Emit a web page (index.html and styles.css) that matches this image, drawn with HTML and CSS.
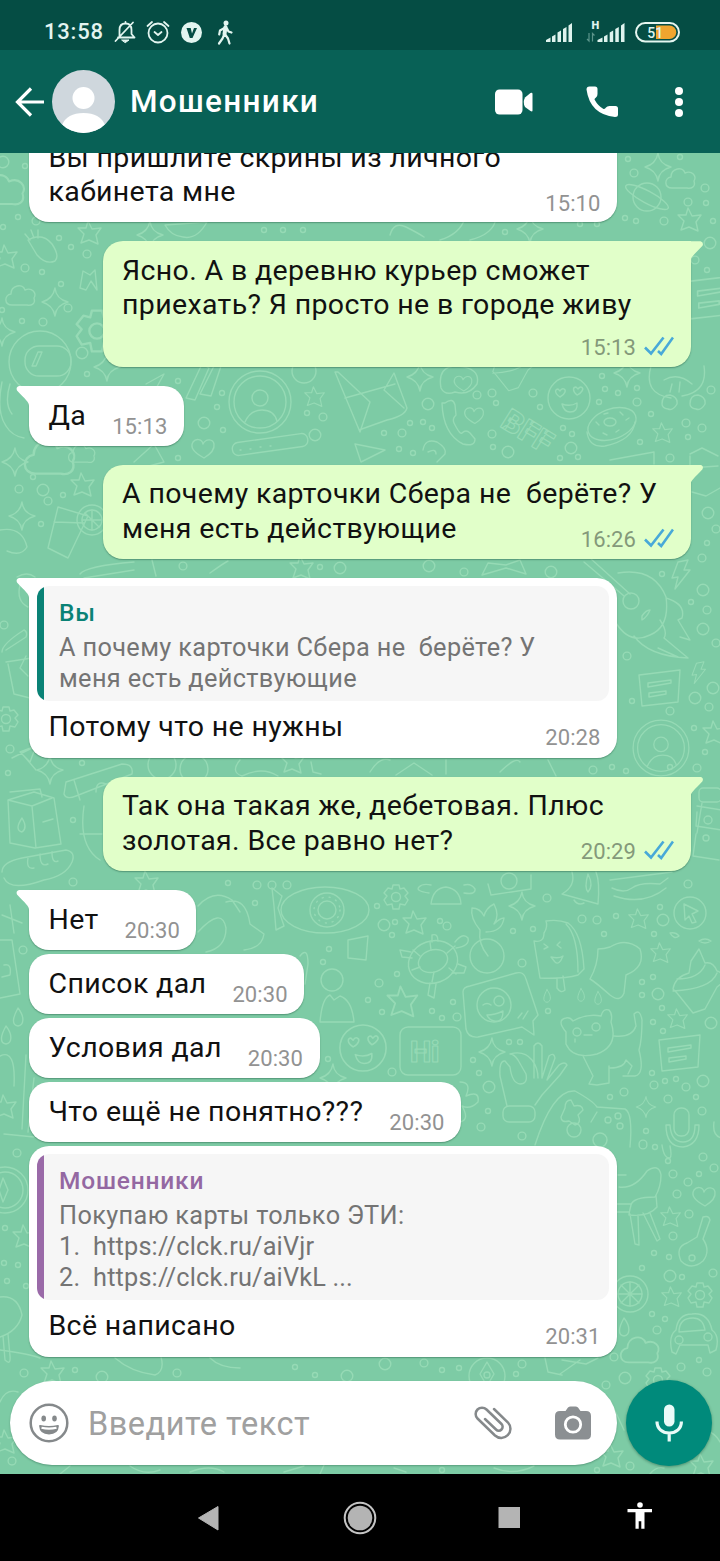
FILE: index.html
```html
<!DOCTYPE html>
<html lang="ru">
<head>
  <meta charset="UTF-8" />
  <meta name="viewport" content="width=device-width, initial-scale=1.0"/>
  <title>Мошенники</title>
  <link rel="stylesheet" href="styles.css">
</head>
<body>
  <div class="statusbar">
    <span class="clock">13:58</span>
    <svg class="status-left" width="122" height="28" viewBox="112 17 122 28" fill="none" stroke="#e3f5f0" stroke-width="1.8" stroke-linecap="round" stroke-linejoin="round">
      <path d="M118 36.500h16.500M119.500 36V29c0-4 2-6.500 6-6.500s6 2.500 6 6.500v4l3 3.500M125.500 22v-1M115.500 40L133 21.500"/>
      <path d="M122 39h7l-3.500 2.500z" fill="#e3f5f0" stroke-width="1"/>
      <circle cx="158" cy="32" r="9.500"/>
      <path d="M154.500 31l3.500 3 3.500-3M147.500 25l4.500-4M168.500 25l-4.500-4"/>
      <circle cx="191.500" cy="31.500" r="10.500" fill="#e3f5f0" stroke="none"/>
      <path d="M186.500 27h4.200l1.300 5.500 2-5.500h3l-4.500 10h-2.700z" fill="#064d44" stroke="none"/>
      <circle cx="226" cy="22" r="2.500" fill="#e3f5f0" stroke="none"/>
      <path d="M225.500 26l-1 7" stroke-width="4"/>
      <path d="M224.500 27l-4.500 2.500-.800 4M227 27.500l1.500 3 3 1M224 34l-1.500 3.500-3.500 5M225.500 34l2.500 3.500 1.500 5" stroke-width="2.200"/>
    </svg>
    <svg class="status-right" width="136" height="26" viewBox="545 18 136 26" fill="#dff3ee">
      <path d="M546 41v-2l4.500-2.500V41zM552 41v-5.500l3.500-2V41zM557.500 41v-9.500l3.500-2V41zM563 41V28l3.500-2v15zM568.500 41V24.500l3.500-2.500v19z"/>
      <text x="591.500" y="28" class="net">H</text>
      <path d="M589 32v8l-2-2M592.500 40.500v-8l2 2" fill="none" stroke="#5c958b" stroke-width="1.200"/>
      <path d="M597.500 41v-2l5-2.500V41zM604 41v-5.500l3.500-2V41zM609.700 41v-9.500l3.500-2V41zM615.300 41V28l3.500-2v15zM621 41V24.500l3.500-2.500v19z"/>
      <rect x="636" y="22" width="43" height="18.500" rx="9.200" fill="none" stroke="#e6f6f0" stroke-width="2"/>
      <path d="M656 24.500h13.500a6.700 6.700 0 0 1 0 13.500H656z" fill="#f0a52f"/>
      <text x="647.200" y="36.800" class="charge">51</text>
    </svg>
  </div>

  <header class="appbar">
    <svg class="back" width="30" height="30" viewBox="0 0 30 30" fill="none" stroke="#fff" stroke-width="3.200"><path d="M16 1.500L2.500 15 16 28.500M2.500 15H29"/></svg>
    <svg class="avatar" width="63" height="63" viewBox="0 0 63 63">
      <clipPath id="round"><circle cx="31.500" cy="31.500" r="31.500"/></clipPath>
      <g clip-path="url(#round)"><rect width="63" height="63" fill="#cfd7dd"/><circle cx="31.500" cy="28" r="11" fill="#fff"/><path d="M10 63V55q5-12 21.500-12T53 55v8z" fill="#fff"/></g>
    </svg>
    <h1 class="title">Мошенники</h1>
    <svg class="video" width="38" height="26" viewBox="0 0 38 26" fill="#fff"><rect x="0" y=".500" width="27.500" height="25" rx="4.500"/><path d="M30 8.500L35.500 4Q37.500 3 37.500 5v16.500q0 1.500-2 .500L30 18q-2.500-4.700 0-9.500z"/></svg>
    <svg class="phone" width="32" height="32" viewBox="0 0 32 32" fill="#fff"><path d="M3.500.500h5.500Q11.500.500 11.500 3v5q0 2.500-1.500 3.500-1.500 1-1.500 2 3.500 6.500 9 9.500 1.500 0 2.500-1.500t3.500-1.500h6q2.500 0 2.500 2.500v6q0 2.500-3 2.500Q4 28.500.500 3.500.500.500 3.500.500z"/></svg>
    <svg class="dots" width="8" height="30" viewBox="0 0 8 30" fill="#fff"><circle cx="4" cy="4" r="4"/><circle cx="4" cy="15" r="4"/><circle cx="4" cy="26" r="4"/></svg>
  </header>

  <main class="chat">
    <svg class="wallpaper" width="720" height="1321" viewBox="0 153 720 1321">
      <defs>
        <path id="star" d="M-2-12L2-4 11-5 6 2 8 11-1 7-9 10-6 1-12-5-4-5z"/>
        <path id="spark" d="M0-14Q1-3 13 0 1 3 0 14-2 3-13 0-2-3 0-14z"/>
        <path id="heart" d="M1 10C-10 4-13-1-10-6-7-10-1-9 0-4 3-10 10-9 11-4 12 2 6 7 1 10z"/>
        <path id="cloud" d="M-11 8c-8 0-8-10-1-11 0-9 12-11 14-4 7-3 12 3 9 8 2 6-3 8-7 7z"/>
        <path id="drop" d="M0-9C7 0 6 8 0 9-7 8-5 0 0-9z"/>
        <path id="bolt" d="M-2-13L8-15 4-5 10-5-5 14-2 2-8 3z"/>
        <g id="gear"><path d="M-3-12h6l1 4 4-1 4 5-3 3 3 4-3 5-5-1-1 5h-6l-1-5-5 1-3-5 3-4-3-3 4-5 4 1z"/><circle r="4.500"/></g>
        <g id="note"><path d="M-21-12L20-17 18 15-18 19zM-12-4L11-7v3L-12 0zM-11 6L6 4v3l-17 3z"/></g>
        <g id="face"><circle r="31"/><circle r="26"/><circle cy="-4" r="8"/><path d="M-15 20Q-10 8 2 8T17 19"/></g>
        <g id="love"><circle r="21"/><path d="M-9-1c-6-4-5-8-2-8l2 2c2-4 6-2 5 1s-3 4-5 5zM8-3c-5-4-4-8-1-8l2 2c3-4 6-1 4 2s-3 3-5 4zM-7 6Q1 9 8 5 9 14 1 14-5 14-7 6z"/></g>
        <g id="cake"><path d="M-24 12Q-22 0-8-4L-6-16 2-28 8-14Q16-16 20-6 28-4 25 6L20 10 8 32-4 36-20 16zM-20 2Q2 2 8-12M-24 14Q14 12 20-4"/></g>
        <path id="rings-s" d="M628 159h0M680 157h0M706 203h0M636 221h0M625 218h0M713 221h0M505 232h0M580 224h0M597 224h0M25 166h0M18 217h0M3 227h0M264 230h0M283 230h0M303 230h0M59 238h0M71 247h0M42 272h0M61 284h0M22 321h0M2 310h0M87 374h0M178 381h0M222 393h0M217 407h0M223 430h0M307 413h0M178 458h0M33 477h0M63 495h0M41 524h0M496 403h0M540 407h0M410 423h0M423 422h0M432 428h0M384 433h0M399 449h0M413 453h0M493 447h0M563 428h0M572 434h0M560 458h0M578 457h0M605 389h0M618 393h0M599 402h0M637 388h0M651 414h0M707 270h0M640 442h0M688 437h0M707 543h0M602 376h0M8 773h0M82 763h0M73 820h0M320 567h0M228 883h0M287 884h0M662 574h0M691 602h0M632 701h0M694 728h0M705 752h0M670 767h0M612 767h0M626 771h0M395 922h0M392 935h0M440 921h0M513 931h0M533 929h0M616 916h0M604 934h0M660 907h0M654 934h0M377 906h0M397 974h0M368 1000h0M382 1012h0M453 1002h0M432 1011h0M442 1018h0M548 1011h0M509 1042h0M520 1042h0M473 1060h0M479 1073h0M642 982h0M653 977h0M642 995h0M662 1008h0M653 1022h0M663 1031h0M652 1073h0M665 1081h0M676 1079h0M696 1097h0M610 1097h0M646 1131h0M488 1111h0M255 903h0M257 885h0M329 949h0M323 962h0M328 1059h0M5 1228h0M4 1263h0M18 1265h0M7 1281h0M26 1286h0M75 1370h0M295 1367h0M315 1375h0M668 1161h0M699 1174h0M654 1253h0M669 1257h0M642 1268h0M682 1277h0M652 1314h0M665 1319h0M699 1360h0M442 1370h0M459 1368h0M516 1374h0M655 1147h0M12 1462h0M597 1470h0M442 1470h0"/>
        <path id="rings-m" d="M705 188h0M688 202h0M634 173h0M664 221h0M36 221h0M87 254h0M25 268h0M68 308h0M43 322h0M323 417h0M19 489h0M48 501h0M477 395h0M492 393h0M533 393h0M402 433h0M492 434h0M637 402h0M686 423h0M702 428h0M711 390h0M695 260h0M670 458h0M716 529h0M702 558h0M4 625h0M10 749h0M73 882h0M183 566h0M257 885h0M272 885h0M627 656h0M707 610h0M716 643h0M709 707h0M670 711h0M697 768h0M593 770h0M464 572h0M447 926h0M522 963h0M582 919h0M597 920h0M688 884h0M547 898h0M379 983h0M457 1017h0M392 1072h0M654 1085h0M686 1087h0M668 1099h0M702 1111h0M624 1092h0M643 1145h0M481 1127h0M522 1136h0M23 950h0M287 885h0M17 1153h0M24 1373h0M177 1373h0M643 1144h0M703 1157h0M714 1168h0M673 1174h0M688 1182h0M677 1194h0M689 1214h0M673 1236h0M713 1273h0M657 1330h0M614 1357h0M681 1367h0M707 1372h0M424 1363h0M522 1364h0M606 1385h0M630 1466h0M12 1461h0"/>
        <path id="rings-l" d="M3 162h0M82 353h0M204 423h0M315 435h0M43 490h0M428 404h0M508 452h0M571 448h0M710 243h0M708 513h0M340 568h0M703 590h0M703 629h0M713 688h0M695 698h0M429 566h0M551 572h0M384 925h0M663 920h0M489 1087h0M658 994h0M711 1023h0M703 1081h0M670 1276h0M625 1378h0M385 1364h0M102 1377h0M347 1376h0"/>
      </defs>
      <rect class="wall" y="153" width="720" height="1321"/>
      <use href="#rings-s" class="ring s"/><use href="#rings-s" class="hole s"/>
      <use href="#rings-m" class="ring m"/><use href="#rings-m" class="hole m"/>
      <use href="#rings-l" class="ring l"/><use href="#rings-l" class="hole l"/>

      <g class="doodles">
        <use href="#star" x="690" y="220"/><use href="#star" x="90" y="233"/><use href="#star" x="6" y="257"/>
        <use href="#star" transform="translate(315 397) scale(.850)"/><use href="#star" x="83" y="485"/><use href="#star" transform="translate(663 433) scale(.850)"/>
        <use href="#star" x="147" y="883"/><use href="#star" x="293" y="762"/><use href="#star" x="715" y="733"/>
        <use href="#star" transform="translate(639 919) scale(.850)"/><use href="#star" x="415" y="923"/><use href="#star" transform="translate(661 953) scale(.850)"/>
        <use href="#star" transform="translate(678 1019) scale(.850)"/><use href="#star" x="5" y="1107"/><use href="#star" x="25" y="1237"/>
        <use href="#star" x="53" y="1373"/><use href="#star" transform="translate(671 1217) scale(.850)"/><use href="#star" transform="translate(672 1297) scale(.850)"/>
        <use href="#star" transform="translate(403 1002) scale(1.300)"/><use href="#star" x="302" y="568"/>
        <use href="#star" x="612" y="1456"/><use href="#star" x="702" y="1466"/><use href="#star" x="6" y="1442"/>
        <use href="#spark" x="658" y="167"/><use href="#spark" x="150" y="235"/><use href="#spark" x="55" y="302"/>
        <use href="#spark" x="107" y="367"/><use href="#spark" x="15" y="462"/><use href="#spark" x="22" y="516"/>
        <use href="#spark" x="420" y="377"/><use href="#spark" x="627" y="373"/><use href="#spark" x="50" y="770"/>
        <use href="#spark" x="522" y="906"/><use href="#spark" x="492" y="1052"/><use href="#spark" transform="translate(646 1107) scale(.750)"/>
        <use href="#spark" x="2" y="332"/><use href="#spark" x="333" y="1078"/><use href="#spark" x="530" y="229"/>
        <use href="#heart" x="203" y="448"/><use href="#heart" transform="translate(474 415) scale(.850)"/>
        <use href="#heart" x="704" y="1196"/><use href="#heart" transform="translate(463 383) scale(.800)"/>
        <use href="#cloud" x="683" y="180"/><use href="#cloud" x="23" y="297"/><use href="#cloud" transform="translate(6 192) scale(1.500)"/>
        <use href="#cloud" transform="translate(643 1352) scale(1.300)"/><use href="#cloud" transform="translate(54 460) scale(1.700)"/>
        <use href="#cloud" transform="translate(84 455) scale(.900)"/>
        <use href="#drop" x="18" y="1017"/><use href="#drop" x="6" y="1035"/><use href="#drop" transform="translate(547 996) scale(.700)"/>
        <use href="#drop" transform="translate(581 995) scale(.700)"/><use href="#drop" transform="translate(598 998) scale(.700)"/><use href="#drop" x="624" y="1327"/>
        <use href="#bolt" x="680" y="575"/><use href="#bolt" transform="translate(698 673) scale(.750)"/>
        <use href="#gear" x="396" y="897"/><use href="#gear" x="6" y="719"/><use href="#gear" x="700" y="1295"/><use href="#gear" x="658" y="1380"/>
        <use href="#gear" transform="translate(97 331) scale(1.700)"/>
        <use href="#note" x="660" y="687"/><use href="#note" x="680" y="1052"/><use href="#note" transform="translate(712 296) scale(1.200)"/>
        <use href="#face" x="260" y="402"/><use href="#face" transform="translate(661 748) scale(.900)"/>
        <use href="#love" x="569" y="398"/><use href="#love" transform="translate(363 1048) scale(1.100)"/>
        <use href="#cake" x="697" y="977"/><use href="#cake" transform="translate(512 362) scale(.800)"/>

        <!-- planet, carrot, helmet -->
        <circle cx="647" cy="197" r="14"/><ellipse cx="647" cy="197" rx="24" ry="6" transform="rotate(28 647 197)"/>
        <path d="M28 240q14-8 24 4 8 12 3 17-9 4-18-6zM30 240l-5-6M34 238l-3-8M38 238v-8M80 288l3-17 7 4 5-5 2 20-6-9-5 9zM165 225l42-3q-10 18-24 15-12-1-18-12zM390 235q4-14 16-8t18 10M440 240q20-6 25-22M470 240q24-6 26-22"/>
        <circle cx="40" cy="362" r="31"/><rect x="25" y="346" width="46" height="30" rx="14"/><path d="M32 366l6-14h4l-6 14zM2 382q-6 30 4 44 6 10 18 12M10 384q-6 20 2 30"/>
        <!-- crayon, flute, slice, cup -->
        <path d="M186 398l16-34 7 4-14 32zM200 394l16-32 5 4-10 30zM134 462l20-18 10 18-30 8M146 384l18-10-10 18"/>
        <rect x="232" y="438" width="76" height="13" rx="6" transform="rotate(-8 270 444)"/><path d="M240 450h1M250 449h1M260 447h1M270 446h1"/>
        <circle cx="92" cy="520" r="15"/><circle cx="92" cy="520" r="10"/><path d="M82 520h20M92 510v20M85 513l14 14M58 507l30 9-20 42-20-10zM54 522l30 1M0 530q22-4 27 17-6 10-20 4"/>
        <circle cx="304" cy="371" r="12"/><path d="M335 372l25 60 10-30-32-30zM345 398l50-14M384 390l10-17 13 35q-2 8-20 12l-28 10M384 390l20 18M355 444l30 6-24 12zM423 450q2-12 14-8 10 6 8 12l-8 8M428 452q8-4 8 2"/>
        <!-- phone, donut, cookie -->
        <path d="M445 403q8-6 10 2l1 10q-4 4-2 8 6 12 8 10 4-4 8 0l5 6q0 8-12 5-20-10-21-41z"/>
        <ellipse cx="612" cy="424" rx="25" ry="15" transform="rotate(-20 612 424)"/><ellipse cx="610" cy="422" rx="6" ry="4"/><path d="M587 432q2 16 18 14 28-6 30-24M596 422l3 3M604 414l4-1M620 412l3 3M626 420l3-2M616 432l3-2M603 433l4 2"/>
        <path d="M441 388q-4-22 16-22 24 2 20 18-8 12-22 8-10 4-14-4zM651 366q-8 28 20 32M704 366q4 26-22 30M664 380q14-8 28 4M672 384l-2 8M680 382l-1 10M690 404q0-9 8-9 8 2 7 9-4 7-9 5-6-1-6-5zM662 404q0-9 8-9 8 2 7 9-4 7-9 5-6-1-6-5zM610 460l44-8v12M690 454l12-6 16 8M690 456v12l28-2M692 492l14 4 14-8"/>
        <text x="499" y="426" class="letters" transform="rotate(32 499 426)">BFF</text>
        <!-- guitar -->
        <circle cx="631" cy="601" r="8"/><path d="M584 562l40 34M590 558l40 36M618 573q36-6 48 24 4 30-16 38-20 10-34-12M642 616q4-6 8-6-3 7-8 10zM666 598q20 6 16 20l-4 2 12 20-10-3M660 620q8 12 4 18l24 20q-40-2-54-22M658 648l20 9M482 575l6-12 18 2 14-5 6 14-20-6z"/>
        <!-- left column: bag, clip, picture, carton, bread -->
        <path d="M17 577q10-6 18 0M20 585q-4 16 8 22M6 662l26-4M8 664l6 30 16 4M26 656l-6 12 8 8M2 652q0-8 22-22 4 2 2 7L6 650M80 574q6-8 54-12M84 578l50-8M152 560l4 16M210 573q14-10 18-12"/>
        <path d="M8 800l26-8 20 6 7 46-26 4-25-5zM8 800l24 6 20-8M32 806l4 42M10 792l30-3 2 8M22 818q-8 12 0 14 6-4 0-14zM43 822l10-3"/>
        <path d="M2 872q0-10 20-14l44-8q10 2 6 12-6 14-28 18-34 12-40-2M28 858q-2 12 6 10M40 854q0 14 8 10M52 852q0 12 6 9"/>
        <path d="M20 752l16-6-6 16zM24 756l12 14M12 758l24-12M66 782l56-18q12 0 10 10l-56 22q-10 4-12-2zM74 780l6 20M96 792q0-12 10-8M84 806q-6 40 16 54M80 834h22"/>
        <circle cx="162" cy="765" r="14"/><circle cx="194" cy="769" r="14"/><path d="M240 760q-10 12 2 16 20-10 36 0M311 762l2 10 8 2M370 772q10-16 20-12M396 775l18-12 18 12M446 760v14M500 772q16-16 20-10M548 760l8 16"/>
        <!-- robot -->
        <rect x="699" y="788" width="22" height="14" rx="4"/><path d="M697 806l24 4M697 812l-1 14 26 4M696 834l-3 22 26 4M702 803l-5 30"/><circle cx="708" cy="820" r="4"/><circle cx="706" cy="838" r="3"/>
        <!-- swan, fish eye, person -->
        <path d="M198 906q16-18 34-6l8 12M198 932q24-26 28-4 0 20-20 24M226 902q20-6 24 22l14 10q-2 14-20 16"/>
        <ellipse cx="325" cy="910" rx="44" ry="23"/><circle cx="327" cy="910" r="17"/><circle cx="327" cy="910" r="9"/><circle cx="327" cy="910" r="13" stroke-dasharray="1 6"/><path d="M274 906l-2-18 10 8-4 12 6 18-8 4z"/>
        <circle cx="332" cy="980" r="11"/><path d="M320 1022q2-24 10-27l4 5 6-4q12 4 14 26zM348 940l20-4-2 24-18-2zM300 956q8-10 8 8l-3 20"/>
        <path d="M0 940h12l8 54-20 4M4 965q8-2 6 10l-8 2M2 915l20 8M10 905l4 28M0 1056q16-8 14 30M26 1055l-4 74M34 1078l-6 54M4 1134l30 3"/>
        <!-- sun, camera, bell, burger, pointer -->
        <path d="M431 904q2-16 15-17 14 2 15 17zM429 893q-14-2-10-6 4-4 12-2M464 893q12 2 11-4-4-6-11-4M488 884l3 11 40-6v-14"/><circle cx="509" cy="881" r="8"/>
        <path d="M562 894q14-8 10-22M596 872q4 10 2 32l-36-10M574 900q4 6 10 3M588 874q6 12 0 18-4-4 0-18zM610 880l62-8M612 888q12 6 20 0t28-4l8-6M614 896q30 10 52-8"/>
        <circle cx="690" cy="913" r="16"/><path d="M684 904l14 7-6 3 4 8-4 1-3-7-4 4zM670 933q6-1 9 3-5 4-9-3zM699 941q6-4 12 0-6 4-12 0z"/>
        <!-- cherry, turtle, ice cream, chat -->
        <circle cx="487" cy="956" r="17"/><path d="M488 956q-10-12-8-26-10-12-8-22 8 0 12 8 2-8 10-12 6 12 0 20 6-6 10-6-2 14-18 14"/>
        <ellipse cx="433" cy="962" rx="25" ry="21" transform="rotate(-20 433 962)"/><ellipse cx="433" cy="961" rx="15" ry="11" transform="rotate(-20 433 961)"/><path d="M413 950l7 6M412 970l8-3M432 982l2-10M449 968l7 6M447 953l8-7M430 942l1 8M432 942v-7q6-2 6 6M455 942q8-10 13-4 2 8-12 10M458 964l8 3-2 6h-12M411 952l-11-2 2 7 10 1M430 983l-2 12 6 3 2-14"/>
        <path d="M534 941q10 2 10-8 4-6 2-12 12-2 22 2 14 10 16 46l-6 6q-14 4-38 3zM566 924q12 12 12 48M544 944l4 3-4 2M560 942l-3 3 4 3M551 957q8 2 12-1-4 10-8 6zM557 978v10q4 6 8 2l-2-14"/>
        <path d="M598 949q6 0 12-2 16-10 30 2 6 18-14 26l-2 18q-4 10-14 2-16-14-20-16 8-14 8-30z"/>
        <path d="M470 986l46-13q8-2 10 6l12 36-5 6 1 14-12-8-44 10q-10 1-12-8L463 992q0-5 7-6z"/><circle cx="494" cy="1005" r="17"/><circle cx="499" cy="1001" r="5"/><path d="M483 1005q4-3 8 0M487 1015q8 0 16-4 0 12-9 10-5-1-7-6zM518 1018l4-5M523 1019l5-8"/>
        <rect x="400" y="1027" width="61" height="48" rx="8"/><text x="410" y="1062" class="letters hi">Hi</text>
        <!-- hand, cat, gamepad, mic -->
        <path d="M507 1106l-7-30q-1-16 5-15l5 6q2 16 10 17 8 0 6-10l-8-14q-4-6-8-6 14-4 22 6 6 8 6 18M535 1105l7-10 18-20 7-10q-2-4-8 0l-12 15 8-22q-1-6-6-2l-7 22V1046q-4-6-8 0v32"/><rect x="503" y="1106" width="32" height="16" rx="6"/>
        <path d="M566 1032q-10-12 0-14 4-1 7 3 14-8 28-5 2-8 8-6 4 4 2 12 8 24-14 32-24 6-31-10zM583 1056q8 16 10 20l-4 8 8 1 12-2V1066M614 1036q18 2 22-10l-2-12q6-6 8 6 0 20-3 30 6 24-4 26h-12M610 1068q14 0 16-8l6 6-4 8M584 1035h8M575 1042v-3"/><circle cx="577" cy="1032" r="4"/><circle cx="596" cy="1027" r="4"/>
        <path d="M535 1145q18-56 40-54 18 10 22 16l28 2q8 4 5 38M565 1108q0-8 6-8l3 6q8-2 9 4l-5 5q4 8-3 10l-6-4q-8 2-8-4zM591 1122l6-10"/><circle cx="574" cy="1130" r="7"/><circle cx="600" cy="1140" r="7"/><circle cx="608" cy="1120" r="3"/><circle cx="618" cy="1116" r="3"/><circle cx="620" cy="1126" r="3"/>
        <rect x="674" y="1108" width="15" height="28" rx="7"/><path d="M666 1125q0 22 17 22 16-2 16-22h-4q0 17-12 17t-13-17zM460 1082q12 0 6 14 14-6 12 6-8 8-16 4 8 14-2 16M714 1122q-2 14 8 16"/>
        <!-- chair, guitar, wheel, car -->
        <path d="M619 1187q16 2 28-16 12-8 14 4 0 12-6 22-22 0-24 8-2 8-2 10 20 2 28-8l-1-12M617 1204h14M617 1212h12M630 1214l5 30 4 1-1-30M643 1213l14 28 3-2-10-26M618 1175h8M662 1145q2 14 8 13 2-2 0-12"/>
        <path d="M697 1237l6-20q6-2 7 3l-7 19q8 12 0 22-12 10-22 0-6-14 6-18z"/><circle cx="692" cy="1258" r="3"/>
        <circle cx="630" cy="1294" r="18"/><circle cx="630" cy="1294" r="12"/><path d="M621 1285l18 18M630 1282v24M639 1285l-18 18M618 1294h24"/>
        <path d="M672 1352q-4-16 4-22 2-16 16-16 16-2 20 16 8 6 4 20l-6 3-2-8h-28l-4 9zM679 1332q0-14 14-14 10 0 12 12z"/><circle cx="679" cy="1340" r="4"/><circle cx="708" cy="1337" r="4"/>
        <circle cx="5" cy="1190" r="23"/><circle cx="5" cy="1190" r="18"/><path d="M3 1178l5 12-5 12-4-12zM0 1297q18-2 22 18-4 16-22 22M3 1336l2 24q6 6 5-4l-2-22M0 1350q30 4 40 8M115 1358q16 14 40 17 10-4 6-18M210 1358q10 10 30 10M545 1358l3 14 14 3M562 1360l24 4 12-6M560 1374l20-14"/>
        <circle cx="487" cy="1376" r="18"/><path d="M487 1362l7 12-7 12-7-12z"/><circle cx="487" cy="1375" r="3"/>
        <path d="M610 1400l14 30M706 1430q10 4 14 12M0 1402q6-14 18-10M130 1466q14 10 30 4M190 1472q20-8 34 0M284 1472l20-6M320 1474l4-9M60 1474l10-8M494 1468q20 8 40-2M394 1468l12 4M650 1474q6-8 14-6"/>
      </g>
    </svg>

    <div class="thread">
      <div class="messages">
        <div class="bubble in wide">
          <p class="text">Вы пришлите скрины из личного<br>кабинета мне</p>
          <span class="meta">15:10</span>
        </div>
        <div class="bubble out wide tail tall">
          <p class="text">Ясно. А в деревню курьер сможет<br>приехать? Я просто не в городе живу</p>
          <span class="meta">15:13<svg class="ticks" width="30" height="20" viewBox="0 0 30 20"><path d="M1 11.500l6 6L19.500 1.500M14 15l3.200 3L29 1.500"/></svg></span>
        </div>
        <div class="bubble in tail">
          <p class="text">Да</p>
          <span class="meta">15:13</span>
        </div>
        <div class="bubble out wide tail">
          <p class="text">А почему карточки Сбера не&nbsp; берёте? У<br>меня есть действующие</p>
          <span class="meta">16:26<svg class="ticks" width="30" height="20" viewBox="0 0 30 20"><path d="M1 11.500l6 6L19.500 1.500M14 15l3.200 3L29 1.500"/></svg></span>
        </div>
        <div class="bubble in wide tail quoted">
          <div class="quote you">
            <strong class="who">Вы</strong>
            <p class="said">А почему карточки Сбера не&nbsp; берёте? У<br>меня есть действующие</p>
          </div>
          <p class="text">Потому что не нужны</p>
          <span class="meta">20:28</span>
        </div>
        <div class="bubble out wide tail">
          <p class="text">Так она такая же, дебетовая. Плюс<br>золотая. Все равно нет?</p>
          <span class="meta">20:29<svg class="ticks" width="30" height="20" viewBox="0 0 30 20"><path d="M1 11.500l6 6L19.500 1.500M14 15l3.200 3L29 1.500"/></svg></span>
        </div>
        <div class="bubble in tail">
          <p class="text">Нет</p>
          <span class="meta">20:30</span>
        </div>
        <div class="bubble in">
          <p class="text">Список дал</p>
          <span class="meta">20:30</span>
        </div>
        <div class="bubble in">
          <p class="text">Условия дал</p>
          <span class="meta">20:30</span>
        </div>
        <div class="bubble in">
          <p class="text">Что ещё не понятно???</p>
          <span class="meta">20:30</span>
        </div>
        <div class="bubble in wide quoted">
          <div class="quote them">
            <strong class="who">Мошенники</strong>
            <p class="said">Покупаю карты только ЭТИ:<br><span class="links">1.&nbsp; https://clck.ru/aiVjr<br>2.&nbsp; https://clck.ru/aiVkL ...</span></p>
          </div>
          <p class="text">Всё написано</p>
          <span class="meta">20:31</span>
        </div>
      </div>

      <div class="composer">
        <div class="field">
          <svg width="40" height="40" viewBox="0 0 40 40" fill="none" stroke="#85898b" stroke-width="2.500"><circle cx="20" cy="20" r="18.300"/><path d="M11 23q9 2 18 0Q28.500 30.500 20 30.500T11 23z" fill="#85898b" stroke-width="1.800" stroke-linejoin="round"/><path d="M12.500 24.800q7.500 1.700 15 0" stroke="#fff" stroke-width="2.200"/><ellipse cx="14.700" cy="15.500" rx="2.300" ry="3" fill="#85898b" stroke="none"/><ellipse cx="25.500" cy="15.500" rx="2.300" ry="3" fill="#85898b" stroke="none"/></svg>
          <span class="placeholder">Введите текст</span>
          <svg class="clip" width="40" height="36" viewBox="0 0 40 36" fill="none" stroke="#85898b" stroke-width="2.500" stroke-linecap="round"><path d="M21 4L35 17.500a9.200 9.200 0 0 1-13 13L4.500 13.500A6.300 6.300 0 0 1 13.500 4.500L28.500 19a3.800 3.800 0 0 1-5.500 5.500L12 14"/></svg>
          <svg width="36" height="34" viewBox="0 0 36 34"><path d="M5 5h5.500l2.500-3.500Q14 .500 15.500 .500h5q1.500 0 2.500 1L25.500 5H31q5 0 5 5v18.500q0 5-5 5H5q-5 0-5-5V10q0-5 5-5z" fill="#8b8f92"/><circle cx="18" cy="18.500" r="7.700" fill="none" stroke="#fff" stroke-width="2.800"/></svg>
        </div>
        <div class="mic">
          <svg width="28" height="38" viewBox="0 0 28 38" fill="none" stroke="#e9fbf8" stroke-width="3.200"><rect x="9" y=".500" width="10.500" height="22" rx="5.200" fill="#e9fbf8" stroke="none"/><path d="M2 17.500c0 7 5 11.500 12.200 11.500s12.200-4.500 12.200-11.500M14.200 29v8.500"/></svg>
        </div>
      </div>
    </div>
  </main>

  <nav class="navbar">
    <svg width="460" height="36" viewBox="196 1500 460 36">
      <path d="M198.500 1518l19.500-11.500v23.500z" fill="#b4b4b4" stroke="#b4b4b4" stroke-linejoin="round"/>
      <circle cx="360" cy="1518" r="15.300" fill="none" stroke="#c4c4c4" stroke-width="2"/><circle cx="360" cy="1518" r="12.300" fill="#b4b4b4"/>
      <rect x="498.500" y="1507" width="21.500" height="21" fill="#b4b4b4"/>
      <circle cx="640" cy="1505" r="2.800" fill="#fff"/><path d="M627.500 1509h24.500v3.200h-7.500v16.500h-3.200v-7.500h-2.600v7.500h-3.200v-16.500h-8z" fill="#fff"/>
    </svg>
  </nav>
</body>
</html>
```
FILE: styles.css
```css
* {
  box-sizing: border-box;
}
body {
  margin: 0;
  width: 720px;
  height: 1561px;
  display: flex;
  flex-direction: column;
  overflow: hidden;
  font-family: Roboto, "Noto Sans", sans-serif;
  background: #000;
}
svg {
  display: block;
  flex: none;
}
p, h1 {
  margin: 0;
}

/* top bars */
.statusbar {
  flex: none;
  height: 50px;
  padding: 13px 39px 0 44px;
  display: flex;
  align-items: center;
  background: #054d44;
}
.clock {
  width: 68px;
  color: #e3f5f0;
  font-size: 22px;
  font-weight: 500;
  letter-spacing: 0.8px;
}
.status-right {
  margin-left: auto;
}
.net {
  font-size: 11px;
  font-weight: 900;
}
.charge {
  font-size: 14px;
  font-weight: 500;
}
.appbar {
  flex: none;
  height: 103px;
  padding: 0 36px 0 15px;
  display: flex;
  align-items: center;
  background: #086156;
}
.avatar {
  margin-left: 7px;
}
.title {
  width: 364px;
  padding-left: 15px;
  color: #fff;
  font-size: 31.5px;
  font-weight: 500;
  letter-spacing: 1.3px;
}
.video {
  margin-left: 16px;
}
.phone {
  margin-left: 53px;
}
.dots {
  margin-left: 57px;
}

/* wallpaper and thread share one grid cell */
.chat {
  flex: none;
  height: 1321px;
  display: grid;
  grid-template: 1321px / 720px;
  overflow: hidden;
}
.wallpaper, .thread {
  grid-area: 1 / 1;
}
.wall {
  fill: #7dcba5;
}
.doodles {
  fill: none;
  stroke: #96dab5;
  stroke-width: 1.4;
  stroke-linejoin: round;
  stroke-linecap: round;
}
.ring, .hole {
  fill: none;
  stroke-linecap: round;
}
.ring { stroke: #96dab5; }
.hole { stroke: #7dcba5; }
.ring.s { stroke-width: 6.4px; }
.hole.s { stroke-width: 3.6px; }
.ring.m { stroke-width: 9.2px; }
.hole.m { stroke-width: 6.4px; }
.ring.l { stroke-width: 13px; }
.hole.l { stroke-width: 10.2px; }
.letters {
  font-size: 31px;
  font-weight: 900;
  stroke-width: 1.2;
}
.hi {
  font-size: 30px;
}

.thread {
  z-index: 1;
  min-height: 0;
  display: flex;
  flex-direction: column;
  justify-content: flex-end;
}
.messages {
  display: flex;
  flex-direction: column;
  align-items: flex-start;
  padding: 0 29.5px 23.5px 29px;
}
.bubble {
  position: relative;
  display: flex;
  gap: 26px;
  margin-top: 4.5px;
  padding: 12.5px 16.5px 12.5px 19.5px;
  border-radius: 20px;
  background: #fff;
  box-shadow: 0 1px 1.5px rgba(0, 50, 30, 0.35);
}
.bubble.tail {
  margin-top: 19.25px;
}
.out {
  align-self: flex-end;
  background: #e1ffc9;
}
.wide {
  flex-direction: column;
  gap: 0;
  width: 588px;
}
.tail::before {
  content: "";
  position: absolute;
  top: 0;
  width: 15px;
  height: 20px;
  background: inherit;
}
.in.tail {
  border-top-left-radius: 0;
}
.out.tail {
  border-top-right-radius: 0;
}
.in.tail::before {
  left: -13px;
  clip-path: path("M3 0H15V20H13C13 16 9 13 1 4.500Q-.500 1 3 0z");
}
.out.tail::before {
  right: -13px;
  clip-path: path("M12 0H0V20H2C2 16 6 13 14 4.500Q15.500 1 12 0z");
}
.text {
  color: #111;
  font-size: 28.5px;
  line-height: 34.5px;
  letter-spacing: 0.36px;
  white-space: nowrap;
}
.meta {
  align-self: flex-end;
  display: flex;
  margin-bottom: -7px;
  color: #929292;
  font-size: 22px;
  line-height: 26px;
  letter-spacing: 0.1px;
}
.wide .meta {
  margin-top: -19px;
}
.wide.tall .meta {
  margin-top: 12.5px;
}
.out .meta {
  color: #84997a;
}
.ticks {
  margin: 1px 0 0 8px;
  fill: none;
  stroke: #48a9d8;
  stroke-width: 2.6;
}
.quoted {
  padding: 8px 16.5px 13.5px 19.5px;
}
/* the coloured bar is part of the background so its inner edge stays straight */
.quote {
  margin: 0 -8.5px 8.5px -11.5px;
  padding: 11px 0 7px 22px;
  border-radius: 12px;
}
.you {
  background: linear-gradient(to right, #0a8276 7px, #f6f6f6 7px);
}
.them {
  background: linear-gradient(to right, #9a6aa8 7px, #f6f6f6 7px);
}
.who {
  display: block;
  margin-bottom: 4px;
  font-size: 24.5px;
  font-weight: 500;
  line-height: 31px;
  letter-spacing: 0.8px;
}
.you .who { color: #0a8276; }
.them .who { color: #9468a2; }
.said {
  color: #747474;
  font-size: 25.3px;
  line-height: 31px;
  letter-spacing: 0.36px;
  white-space: nowrap;
}
.links {
  letter-spacing: 0.16px;
}

/* input row */
.composer {
  display: flex;
  align-items: center;
  gap: 9px;
  padding: 0 8px 8px 10px;
}
.field {
  flex: 1;
  height: 84px;
  padding: 0 26px 0 19px;
  display: flex;
  align-items: center;
  border-radius: 42px;
  background: #fff;
  box-shadow: 0 1px 2px rgba(0, 50, 30, 0.3);
}
.placeholder {
  flex: 1;
  padding: 2px 0 0 19px;
  color: #a0a0a0;
  font-size: 32.5px;
  letter-spacing: 0.5px;
}
.clip {
  margin-right: 42px;
}
.mic {
  width: 86px;
  height: 86px;
  display: flex;
  align-items: center;
  justify-content: center;
  border-radius: 50%;
  background: #008a7b;
  box-shadow: 0 1px 3px rgba(0, 50, 30, 0.4);
}

.navbar {
  flex: none;
  height: 87px;
  padding: 26px 0 0 196px;
  background: #000;
}
```
